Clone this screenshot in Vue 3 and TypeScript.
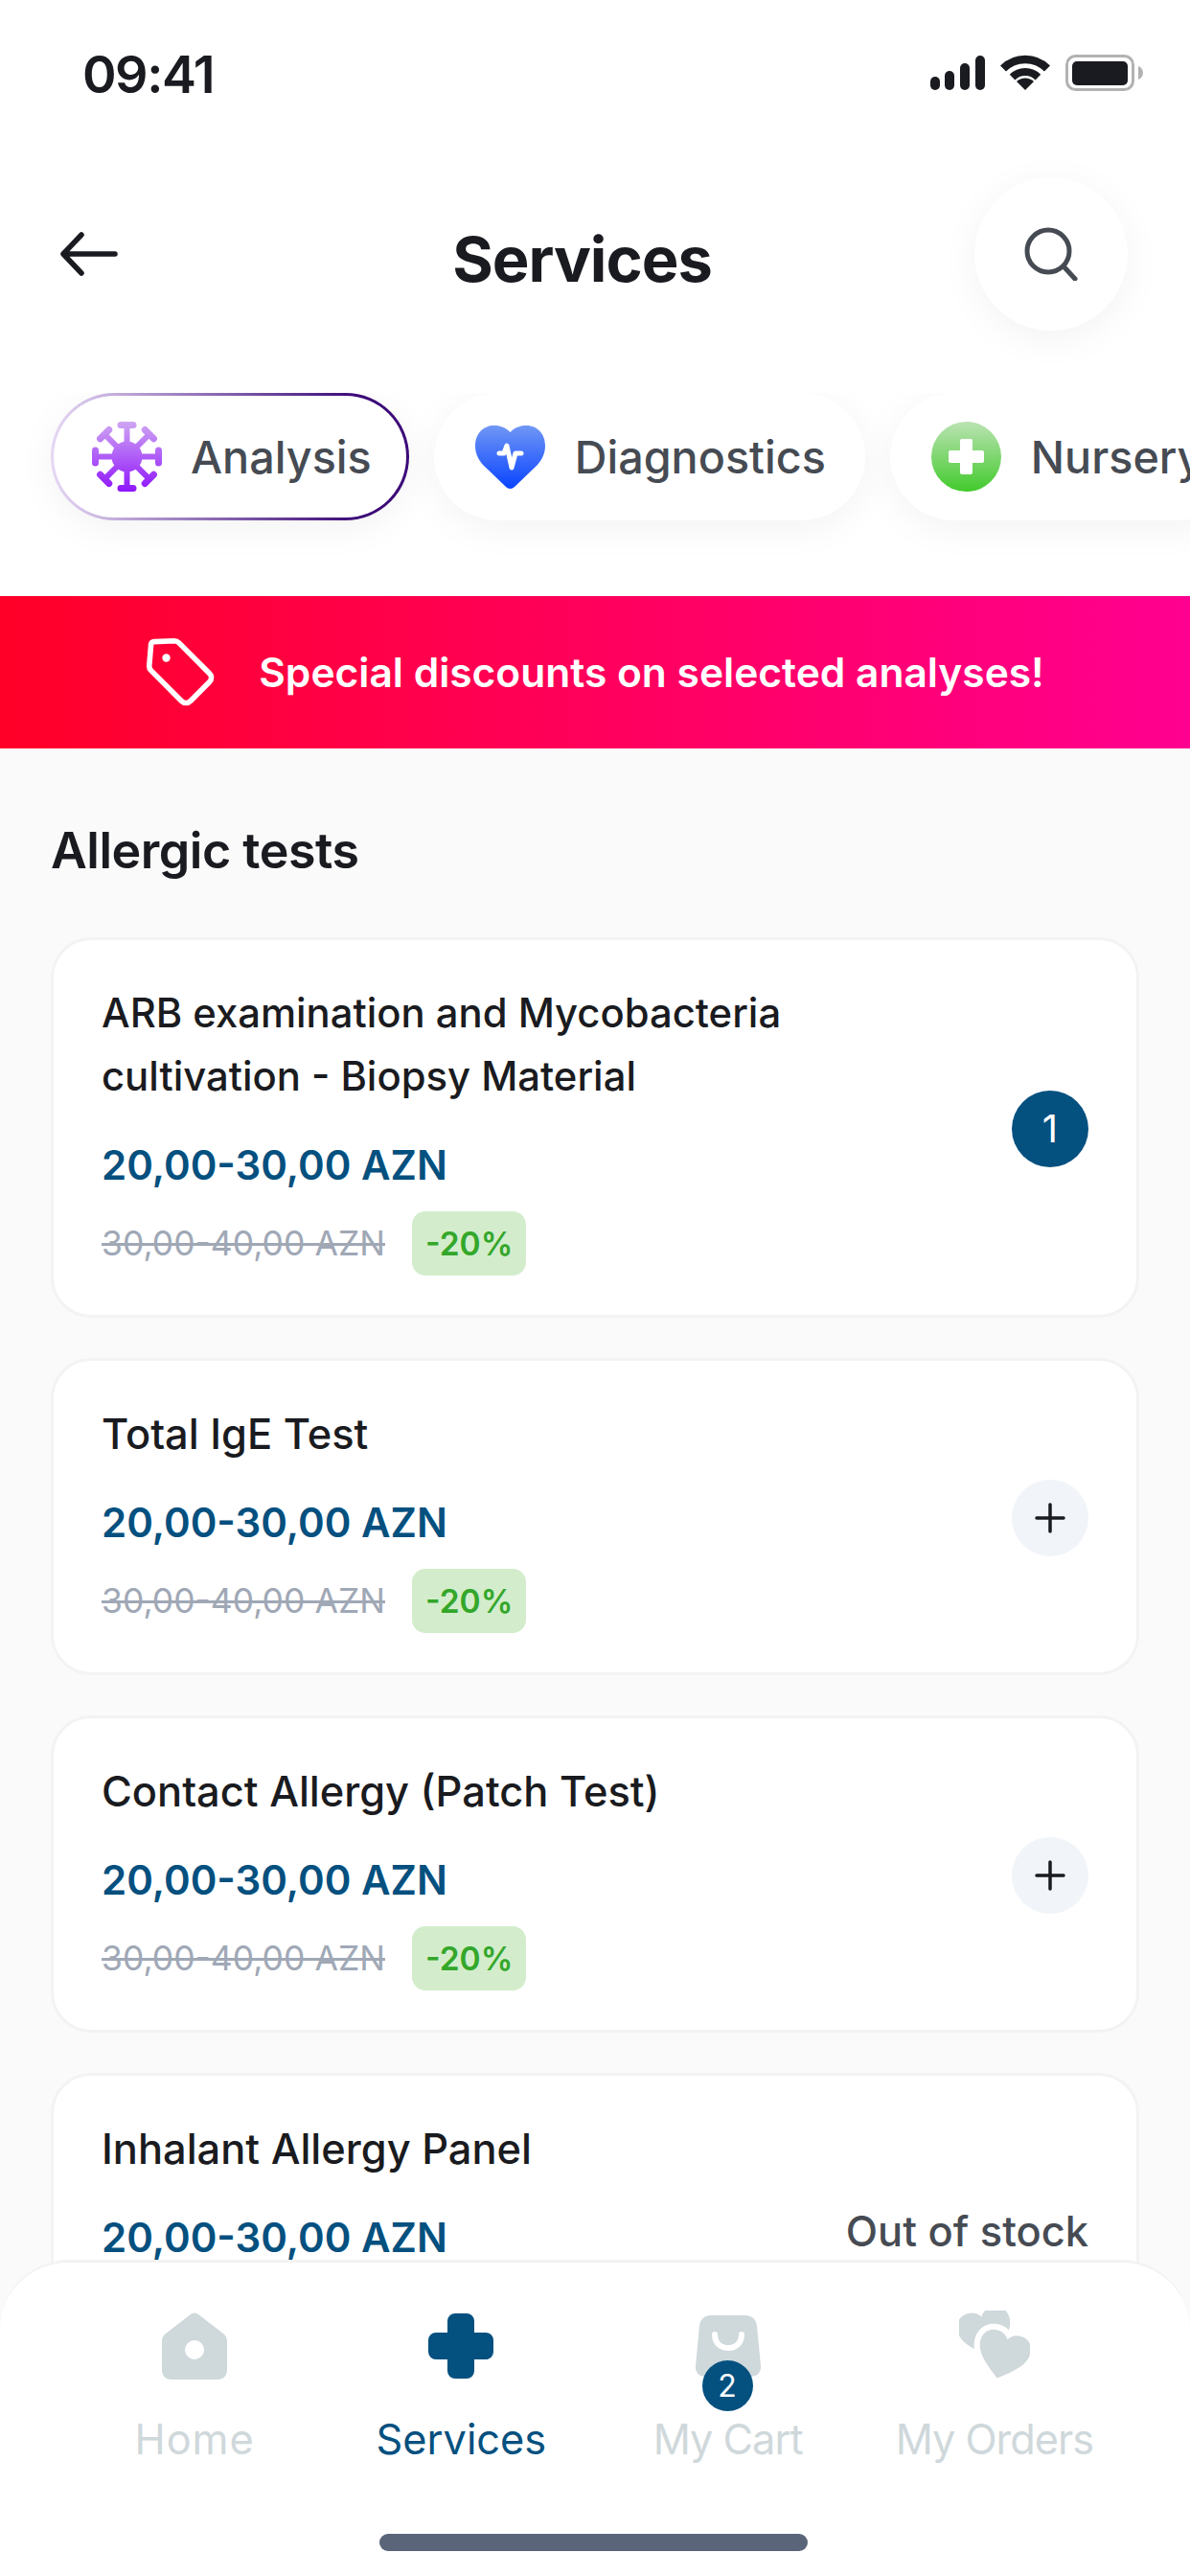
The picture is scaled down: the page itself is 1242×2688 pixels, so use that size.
<script setup lang="ts">
import { ref } from "vue";

interface Service {
  id: number;
  name: string;
  qty?: number;
  stock?: boolean;
}

const services = ref<Service[]>([
  { id: 1, name: "ARB examination and Mycobacteria cultivation - Biopsy Material", qty: 1 },
  { id: 2, name: "Total IgE Test" },
  { id: 3, name: "Contact Allergy (Patch Test)" },
  { id: 4, name: "Inhalant Allergy Panel", stock: false },
]);

const heart = "M20 36C8 27 0 20 0 11 0 4 5 0 11 0c4 0 7 2 9 5 2-3 5-5 9-5 6 0 11 4 11 11 0 9-8 16-20 25z";
const spikes = [0, 45, 90, 135, 180, 225, 270, 315];
</script>

<template>
  <div class="screen">
    <div class="status">
      <span class="time">09:41</span>
      <div class="status-icons">
        <svg width="58" height="36" viewBox="0 0 58 36">
          <rect x="1" y="22" width="10" height="14" rx="5" fill="#1a1b20" />
          <rect x="16" y="16" width="10" height="20" rx="5" fill="#1a1b20" />
          <rect x="32" y="8" width="10" height="28" rx="5" fill="#1a1b20" />
          <rect x="48" y="0" width="10" height="36" rx="5" fill="#1a1b20" />
        </svg>
        <svg width="52" height="38" viewBox="0 0 52 38">
          <path d="M3 14.500A32.500 32.500 0 0 1 49 14.500" fill="none" stroke="#1a1b20" stroke-width="8.500" />
          <path d="M12.600 23.600A19 19 0 0 1 39.400 23.600" fill="none" stroke="#1a1b20" stroke-width="8" />
          <path d="M17 28A13 13 0 0 1 35 28L26 37z" fill="#1a1b20" />
        </svg>
        <svg width="81" height="38" viewBox="0 0 81 38">
          <rect x="1.500" y="1.500" width="69" height="35" rx="9" fill="none" stroke="#b2b2b4" stroke-width="3" />
          <rect x="7" y="7" width="58" height="25" rx="5" fill="#1a1b20" />
          <path d="M76 12c3 1 5 4 5 7s-2 6-5 7z" fill="#b2b2b4" />
        </svg>
      </div>
    </div>

    <header class="topbar">
      <svg class="back" width="60" height="46" viewBox="0 0 60 46">
        <path d="M57 23H4M22 3 3 23l19 20" fill="none" stroke="#1a1b20" stroke-width="5.500" stroke-linecap="round" stroke-linejoin="round" />
      </svg>
      <h1 class="title">Services</h1>
      <button class="search">
        <svg width="56" height="56" viewBox="0 0 56 56">
          <circle cx="25" cy="25" r="22" fill="none" stroke="#464b53" stroke-width="5" />
          <path d="M42 42l11 12" stroke="#464b53" stroke-width="5" stroke-linecap="round" />
        </svg>
      </button>
    </header>

    <div class="chips">
      <div class="chip active">
        <svg width="73" height="73" viewBox="0 0 73 73">
          <defs>
            <linearGradient id="vir" x1="0" y1="0" x2="0" y2="1">
              <stop offset="0" stop-color="#cfa6f3" />
              <stop offset="1" stop-color="#8f14fb" />
            </linearGradient>
            <mask id="virus">
              <circle cx="36.500" cy="36.500" r="16" fill="#fff" />
              <path
                v-for="deg in spikes"
                :key="deg"
                d="M33.500 7h-3.500a3.500 3.500 0 0 1 0-7h13a3.500 3.500 0 0 1 0 7h-3.500v18h-6z"
                fill="#fff"
                :transform="`rotate(${deg} 36.500 36.500)`"
              />
            </mask>
          </defs>
          <rect width="73" height="73" fill="url(#vir)" mask="url(#virus)" />
        </svg>
        <span>Analysis</span>
      </div>
      <div class="chip">
        <svg width="73" height="66" viewBox="0 0 73 66">
          <defs>
            <linearGradient id="heart" x1="0" y1="0" x2="0" y2="1">
              <stop offset="0" stop-color="#7097f5" />
              <stop offset="1" stop-color="#0a44ff" />
            </linearGradient>
          </defs>
          <path d="M36.500 7C31 1.500 25 0 19.500 0 8 0 0 9 0 21c0 8 3 14 8 20l24 23c2.500 2.500 6.500 2.500 9 0l24-23c5-6 8-12 8-20C73 9 65 0 53.500 0 48 0 42 1.500 36.500 7z" fill="url(#heart)" />
          <path d="M25 29h5l3-8 5 23 4-15h6" fill="none" stroke="#fff" stroke-width="5" stroke-linecap="round" stroke-linejoin="round" />
        </svg>
        <span>Diagnostics</span>
      </div>
      <div class="chip">
        <svg width="73" height="73" viewBox="0 0 73 73">
          <defs>
            <linearGradient id="plus" x1="0" y1="0" x2="0" y2="1">
              <stop offset="0" stop-color="#bbe3b3" />
              <stop offset="1" stop-color="#42ca2c" />
            </linearGradient>
          </defs>
          <circle cx="36.500" cy="36.500" r="36.500" fill="url(#plus)" />
          <path d="M30 20a2 2 0 0 1 2-2h9a2 2 0 0 1 2 2v10h10a2 2 0 0 1 2 2v9a2 2 0 0 1-2 2H43v10a2 2 0 0 1-2 2h-9a2 2 0 0 1-2-2V43H20a2 2 0 0 1-2-2v-9a2 2 0 0 1 2-2h10z" fill="#fff" />
        </svg>
        <span>Nursery</span>
      </div>
    </div>

    <div class="banner">
      <svg width="73" height="73" viewBox="0 0 78 78">
        <path d="M6 8a3 3 0 0 1 3-3l23-1c2 0 4 1 5 2l34 34c3 3 3 7 0 10L50 71c-3 3-7 3-10 0L6 37c-1-1-2-3-2-5z" fill="none" stroke="#fff" stroke-width="6" stroke-linejoin="round" />
        <circle cx="23" cy="23" r="4.500" fill="#fff" />
      </svg>
      <span>Special discounts on selected analyses!</span>
    </div>

    <main class="content">
      <h2 class="section">Allergic tests</h2>
      <div class="list">
        <article v-for="item in services" :key="item.id" class="card">
          <div class="info">
            <div class="name" :class="{ long: item.id === 1 }">{{ item.name }}</div>
            <div class="price">20,00-30,00 AZN</div>
            <div class="old-row">
              <span class="old">30,00-40,00 AZN</span>
              <span class="off">-20%</span>
            </div>
          </div>
          <span v-if="item.stock === false" class="stock">Out of stock</span>
          <div v-else-if="item.qty" class="qty">{{ item.qty }}</div>
          <div v-else class="add">
            <svg width="32" height="32" viewBox="0 0 32 32">
              <path d="M16 2v28M2 16h28" stroke="#1a1b20" stroke-width="3.500" stroke-linecap="round" />
            </svg>
          </div>
        </article>
      </div>
    </main>

    <nav class="tabbar">
      <div class="tabs">
        <div class="tab wide">
          <svg width="68" height="70" viewBox="0 0 68 70">
            <path fill-rule="evenodd" d="M30 2c2.500-2 5.500-2 8 0l26 20c2.500 2 4 4.500 4 8v30c0 6-4 10-10 10H10C4 70 0 66 0 60V30c0-3.500 1.500-6 4-8zM34 29a10 10 0 1 0 0 20 10 10 0 0 0 0-20z" fill="#cfd8db" />
          </svg>
          <span>Home</span>
        </div>
        <div class="tab on">
          <svg width="68" height="68" viewBox="0 0 68 68">
            <path d="M20 8a8 8 0 0 1 8-8h12a8 8 0 0 1 8 8v12h12a8 8 0 0 1 8 8v12a8 8 0 0 1-8 8H48v12a8 8 0 0 1-8 8H28a8 8 0 0 1-8-8V48H8a8 8 0 0 1-8-8V28a8 8 0 0 1 8-8h12z" fill="#04507f" />
          </svg>
          <span>Services</span>
        </div>
        <div class="tab tight">
          <div class="bag">
            <svg width="68" height="64" viewBox="0 0 68 64">
              <path d="M4 11C4.500 5 9 0 16 0h36c7 0 11.500 5 12 11l4 42c.5 7-4 11-11 11H11C4 64-.5 60 0 53z" fill="#cfd8db" />
              <path d="M20 20c0 9 6 14 14 14s14-5 14-14" fill="none" stroke="#fff" stroke-width="6" stroke-linecap="round" />
            </svg>
            <b class="badge">2</b>
          </div>
          <span>My Cart</span>
        </div>
        <div class="tab tight">
          <svg width="74" height="74" viewBox="0 0 74 74">
            <path :d="heart" fill="#cfd8db" transform="translate(28 24) rotate(-15) scale(1.400) translate(-20 -18)" />
            <path :d="heart" fill="#cfd8db" stroke="#fff" stroke-width="9" paint-order="stroke" transform="translate(46 47) rotate(15) scale(1.350) translate(-20 -18)" />
          </svg>
          <span>My Orders</span>
        </div>
      </div>
      <div class="home-bar"></div>
    </nav>
  </div>
</template>

<style>
body {
  margin: 0;
  background: #fff;
}
</style>

<style scoped>
* {
  box-sizing: border-box;
}
.screen {
  position: relative;
  width: 1242px;
  height: 2688px;
  overflow: hidden;
  background: #fafafa;
  font-family: Inter, "Liberation Sans", sans-serif;
  color: #1a1b20;
}
.status {
  height: 157px;
  padding: 57px 49px 0 86px;
  display: flex;
  justify-content: space-between;
  align-items: flex-start;
  background: #fff;
}
.time {
  font-size: 54px;
  line-height: 42px;
  font-weight: 600;
  letter-spacing: -1.500px;
}
.status-icons {
  display: flex;
  align-items: center;
  gap: 16px;
}
.topbar {
  height: 253px;
  padding: 28px 65px 0 63px;
  display: flex;
  justify-content: space-between;
  align-items: flex-start;
  background: #fff;
}
.back {
  margin-top: 57px;
}
.title {
  margin: 50px 0 0 75px;
  font-size: 65px;
  line-height: 72px;
  font-weight: 700;
  letter-spacing: -1px;
}
.search {
  width: 160px;
  height: 160px;
  border: 0;
  border-radius: 50%;
  background: #fff;
  box-shadow: 0 8px 40px rgba(0, 0, 0, 0.05);
  display: flex;
  align-items: center;
  justify-content: center;
}
.chips {
  height: 212px;
  padding: 0 0 0 53px;
  display: flex;
  gap: 26px;
  background: #fff;
  overflow: hidden;
}
.chip {
  height: 133px;
  flex: none;
  padding: 0 41px 0 43px;
  display: flex;
  align-items: center;
  gap: 31px;
  border-radius: 67px;
  background: #fff;
  box-shadow: 0 8px 40px rgba(0, 0, 0, 0.05);
  font-size: 46.700px;
  font-weight: 500;
  color: #464b53;
}
.chip.active {
  border: 3px solid transparent;
  padding: 0 36px 0 40px;
  gap: 30px;
  background:
    linear-gradient(#fff, #fff) padding-box,
    linear-gradient(90deg, #e6d8f5 0%, #3c0a78 85%) border-box;
}
.banner {
  height: 159px;
  display: flex;
  align-items: center;
  justify-content: center;
  gap: 45px;
  background: linear-gradient(90deg, #ff0028, #ff0090);
  color: #fff;
  font-size: 42.500px;
  font-weight: 600;
}
.content {
  padding: 76px 53px 0;
}
.section {
  margin: 0 0 59px;
  font-size: 52px;
  line-height: 62px;
  font-weight: 600;
  letter-spacing: -0.500px;
}
.list {
  display: flex;
  flex-direction: column;
  gap: 42px;
}
.card {
  padding: 43px 50px 41px;
  display: flex;
  align-items: center;
  justify-content: space-between;
  background: #fff;
  border: 3px solid #f3f3f3;
  border-radius: 42px;
}
.info {
  width: 760px;
}
.name {
  font-size: 43.400px;
  line-height: 66px;
  font-weight: 500;
}
.name.long {
  font-size: 41.800px;
}
.price {
  margin-top: 32px;
  font-size: 42px;
  line-height: 56px;
  font-weight: 600;
  color: #04507f;
}
.old-row {
  margin-top: 20px;
  display: flex;
  align-items: center;
  gap: 28px;
}
.old {
  font-size: 35.500px;
  color: #a0a8b6;
  text-decoration: line-through;
}
.off {
  height: 67px;
  padding: 0 14px;
  display: flex;
  align-items: center;
  border-radius: 14px;
  background: #d3edcc;
  color: #34a72a;
  font-size: 33.500px;
  font-weight: 600;
}
.qty,
.add {
  width: 80px;
  height: 80px;
  flex: none;
  border-radius: 50%;
  display: flex;
  align-items: center;
  justify-content: center;
}
.qty {
  background: #04507f;
  color: #fff;
  font-size: 40px;
}
.add {
  background: #f1f4f8;
}
.stock {
  align-self: flex-start;
  margin-top: 94px;
  font-size: 43.400px;
  line-height: 50px;
  font-weight: 500;
  color: #464b53;
}
.tabbar {
  position: absolute;
  left: 0;
  right: 0;
  bottom: 0;
  height: 330px;
  padding: 50px 65px 0 64px;
  background: #fff;
  border-top: 3px solid #f3f3f3;
  border-radius: 72px 72px 0 0;
}
.tabs {
  display: grid;
  grid-template-columns: repeat(4, 1fr);
}
.tab {
  display: flex;
  flex-direction: column;
  align-items: center;
  font-size: 43.300px;
  line-height: 54px;
  color: #cfd8db;
}
.tab.wide {
  letter-spacing: 1px;
}
.tab.tight {
  letter-spacing: -1px;
}
.tab > svg,
.bag {
  height: 74px;
}
.tab span {
  margin-top: 33px;
}
.tab.on {
  color: #04507f;
}
.bag {
  position: relative;
  padding-top: 5px;
}
.bag svg {
  display: block;
}
.badge {
  position: absolute;
  left: 7px;
  top: 52px;
  width: 53px;
  height: 53px;
  border-radius: 50%;
  display: flex;
  align-items: center;
  justify-content: center;
  background: #04507f;
  color: #fff;
  font-size: 32px;
  font-weight: 400;
  letter-spacing: 0;
}
.home-bar {
  position: absolute;
  left: 396px;
  top: 283px;
  width: 447px;
  height: 18px;
  border-radius: 9px;
  background: #5a6579;
}
</style>
